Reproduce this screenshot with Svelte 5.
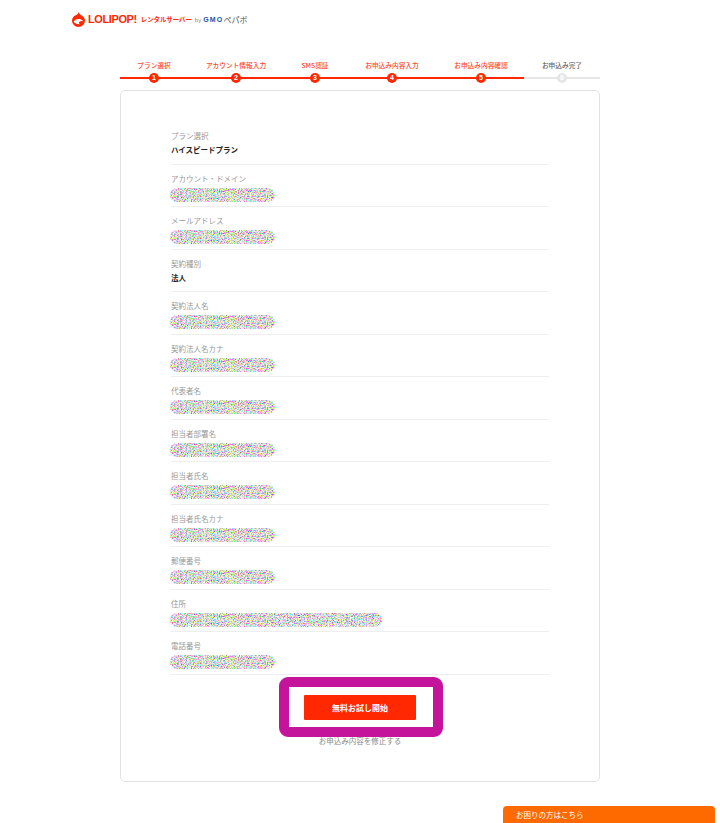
<script>
  const steps = [
    { label: 'プラン選択', done: true },
    { label: 'アカウント情報入力', done: true },
    { label: 'SMS認証', done: true },
    { label: 'お申込み内容入力', done: true },
    { label: 'お申込み内容確認', done: true },
    { label: 'お申込み完了', done: false },
  ];

  const rows = [
    { label: 'プラン選択', value: 'ハイスピードプラン' },
    { label: 'アカウント・ドメイン' },
    { label: 'メールアドレス' },
    { label: '契約種別', value: '法人' },
    { label: '契約法人名' },
    { label: '契約法人名カナ' },
    { label: '代表者名' },
    { label: '担当者部署名' },
    { label: '担当者氏名' },
    { label: '担当者氏名カナ' },
    { label: '郵便番号' },
    { label: '住所', long: true },
    { label: '電話番号' },
  ];
</script>

<svg class="defs" width="0" height="0" aria-hidden="true">
  <filter id="noise" x="0" y="0" width="100%" height="100%" color-interpolation-filters="sRGB">
    <feTurbulence type="fractalNoise" baseFrequency="0.85" numOctaves="2" seed="7" />
    <feColorMatrix values="2 0 0 0 -0.12  0 2 0 0 -0.12  0 0 2 0 -0.12  0 0 0 0 1" />
    <feGaussianBlur stdDeviation="0.4" />
    <feComposite in2="SourceAlpha" operator="in" />
  </filter>
</svg>

<div class="page">
  <header class="header">
    <svg class="flame" viewBox="0 0 13 15" width="13" height="15" aria-hidden="true">
      <path d="M6.8 0 C7.2 1.6 8 2.3 9.6 3.4 C11.6 4.6 13 6.2 13 8.6 C13 12.2 10.1 15 6.5 15 C2.9 15 0 12.2 0 8.6 C0 6 1.7 4.1 3.7 3.2 C5.2 2.5 6.4 1.6 6.8 0 Z" fill="#ff2800" />
      <path d="M1.6 9.4 C3.2 7.4 5.4 6.6 7.6 7 C9.6 7.4 10.8 8.6 11.4 9.4 C10 8.8 8.2 8.8 7.4 9.8 C6.8 10.6 7 11.6 7.6 12.2 C5 12.4 2.8 11.2 1.6 9.4 Z" fill="#fff" />
    </svg>
    <span class="brand">LOLIPOP!</span>
    <span class="rental">レンタルサーバー</span>
    <span class="by">by</span>
    <span class="gmo">GMO</span>
    <span class="pepabo">ペパボ</span>
  </header>

  <ol class="steps">
    {#each steps as step, i}
      <li class="step" class:done={step.done}>
        <span class="step-label">{step.label}</span>
        <span class="step-num">{i + 1}</span>
      </li>
    {/each}
  </ol>

  <main class="card">
    <dl class="rows">
      {#each rows as row}
        <div class="row">
          <dt>{row.label}</dt>
          {#if row.value}
            <dd>{row.value}</dd>
          {:else}
            <dd class="masked" class:long={row.long}></dd>
          {/if}
        </div>
      {/each}
    </dl>

    <div class="highlight">
      <button class="submit" type="button">無料お試し開始</button>
    </div>
    <a class="back" href="#top">お申込み内容を修正する</a>
  </main>
</div>

<button class="help" type="button">お困りの方はこちら</button>

<style>
  :global(body) {
    margin: 0;
    background: #fff;
    font-family: "Noto Sans CJK JP", "Noto Sans", sans-serif;
    overflow: hidden;
  }
  .defs {
    position: absolute;
  }
  .page {
    width: 720px;
    height: 823px;
    box-sizing: border-box;
    padding-top: 10px;
  }
  .header {
    display: flex;
    align-items: center;
    height: 18px;
    padding-left: 72px;
    white-space: nowrap;
  }
  .flame {
    margin-right: 3px;
  }
  .brand {
    font-family: "Liberation Sans", sans-serif;
    font-weight: 700;
    font-size: 11px;
    letter-spacing: -0.4px;
    color: #ff2800;
    margin-right: 4px;
  }
  .rental {
    font-size: 6.4px;
    font-weight: 700;
    color: #ff2800;
    margin-right: 3px;
  }
  .by {
    font-family: "Liberation Sans", sans-serif;
    font-size: 6px;
    color: #888;
    margin: 1px 2px 0 0;
  }
  .gmo {
    font-family: "Liberation Sans", sans-serif;
    font-size: 7px;
    font-weight: 700;
    letter-spacing: 1.2px;
    color: #1a56a8;
  }
  .pepabo {
    font-size: 8px;
    font-weight: 400;
    color: #555;
  }
  .steps {
    display: grid;
    grid-template-columns: 68px 96px 62px 92px 86px 76px;
    width: 480px;
    margin: 32px 0 0 120px;
    padding: 0;
    list-style: none;
  }
  .step {
    display: flex;
    flex-direction: column;
    align-items: center;
    position: relative;
    color: #666;
  }
  .step.done {
    color: #ff4a2a;
  }
  .step::after {
    content: "";
    position: absolute;
    left: 0;
    right: 0;
    bottom: 4px;
    height: 2px;
    background: #e6e6e6;
  }
  .step.done::after {
    background: #ff2800;
  }
  .step-label {
    font-size: 6.7px;
    line-height: 10px;
    font-weight: 500;
    white-space: nowrap;
  }
  .step-num {
    position: relative;
    z-index: 1;
    width: 10px;
    height: 10px;
    margin-top: 3px;
    border-radius: 50%;
    background: #e6e6e6;
    color: #fff;
    font-family: "Liberation Sans", sans-serif;
    font-size: 7px;
    font-weight: 700;
    line-height: 10px;
    text-align: center;
  }
  .done .step-num {
    background: #ff2800;
  }
  .card {
    box-sizing: border-box;
    width: 480px;
    height: 692px;
    margin: 7px 0 0 120px;
    padding: 31px 50px 0;
    border: 1px solid #e3e3e3;
    border-radius: 5px;
    text-align: center;
  }
  .rows {
    margin: 0;
    text-align: left;
  }
  .row {
    box-sizing: border-box;
    height: 42.5px;
    padding-top: 9px;
    border-bottom: 1px solid #eee;
  }
  dt {
    font-size: 7.5px;
    line-height: 10px;
    color: #999;
  }
  dd {
    margin: 4px 0 0;
    font-size: 7.5px;
    line-height: 10px;
    font-weight: 700;
    color: #222;
  }
  .masked {
    width: 105px;
    height: 14px;
    margin: 4px 0 0 -1px;
    border-radius: 7px;
    background: #000;
    filter: url(#noise);
  }
  .masked.long {
    width: 212px;
  }
  .highlight {
    display: inline-flex;
    margin: 2px 0 0 2px;
    padding: 8px 17px 7px 15px;
    border: 10px solid #c5149c;
    border-radius: 9px;
    background: #fff;
  }
  .submit {
    width: 112px;
    height: 25px;
    padding: 0;
    border: 0;
    border-radius: 1px;
    background: #ff2800;
    color: #fff;
    font-family: inherit;
    font-size: 8px;
    font-weight: 700;
  }
  .back {
    display: block;
    margin-top: -1px;
    font-size: 7.5px;
    line-height: 10px;
    color: #888;
    text-decoration: none;
  }
  .help {
    position: fixed;
    left: 503px;
    bottom: 0;
    width: 212px;
    height: 17px;
    padding: 0 0 0 13px;
    border: 0;
    border-radius: 4px 4px 0 0;
    background: #ff6a00;
    color: #fff;
    font-family: inherit;
    font-size: 7.5px;
    text-align: left;
  }
</style>
